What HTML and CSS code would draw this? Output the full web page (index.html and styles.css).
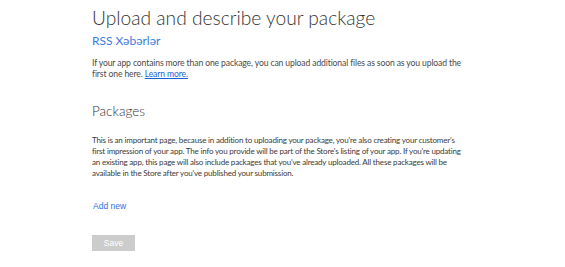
FILE: index.html
```
<!DOCTYPE html>
<html>
<head>
<meta charset="utf-8">
<link rel="stylesheet" href="styles.css">
</head>
<body>
<main class="page">
  <h1 class="title">Upload and describe your package</h1>
  <div class="app-name">RSS Xəbərlər</div>
  <p class="intro">If your app contains more than one package, you can upload additional files as soon as you upload the first one here. <a class="learn" href="#">Learn more.</a></p>
  <h2 class="section">Packages</h2>
  <p class="desc">This is an important page, because in addition to uploading your package, you're also creating your customer's first impression of your app. The info you provide will be part of the Store's listing of your app. If you're updating an existing app, this page will also include packages that you've already uploaded. All these packages will be available in the Store after you've published your submission.</p>
  <a class="add-new" href="#">Add new</a>
  <button class="save" type="button">Save</button>
</main>
</body>
</html>
```
FILE: styles.css
```
html, body {
  margin: 0;
  padding: 0;
  background: #ffffff;
}
.page {
  display: flex;
  flex-direction: column;
  align-items: flex-start;
  padding: 6px 0 0 92px;
  width: 377px;
  font-family: Lato, "Open Sans", sans-serif;
}
.title {
  margin: 0;
  font-size: 19.2px;
  font-weight: 300;
  color: #333333;
  line-height: 24px;
}
.app-name {
  margin-top: 3px;
  font-size: 12px;
  color: #3d7be0;
  line-height: 15px;
}
.intro {
  margin: 10px 0 0 0;
  font-size: 8.6px;
  letter-spacing: -0.12px;
  line-height: 11px;
  color: #4a4a4a;
}
.learn {
  color: #1a5fd6;
  text-decoration: underline;
}
.section {
  margin: 22px 0 0 0;
  font-size: 13.5px;
  font-weight: 300;
  color: #333333;
  line-height: 18px;
}
.desc {
  margin: 15px 0 0 0;
  font-size: 8px;
  letter-spacing: -0.18px;
  line-height: 11px;
  color: #3a3a3a;
}
.add-new {
  margin-top: 22px;
  margin-left: 1px;
  font-family: "Liberation Sans", Arial, sans-serif;
  font-size: 8.5px;
  color: #2f6fe0;
  text-decoration: none;
}
.save {
  margin-top: 24px;
  width: 43px;
  height: 16px;
  padding: 0;
  border: none;
  background: #cccccc;
  color: #ffffff;
  font-family: "Liberation Sans", Arial, sans-serif;
  font-size: 8.5px;
}
```
